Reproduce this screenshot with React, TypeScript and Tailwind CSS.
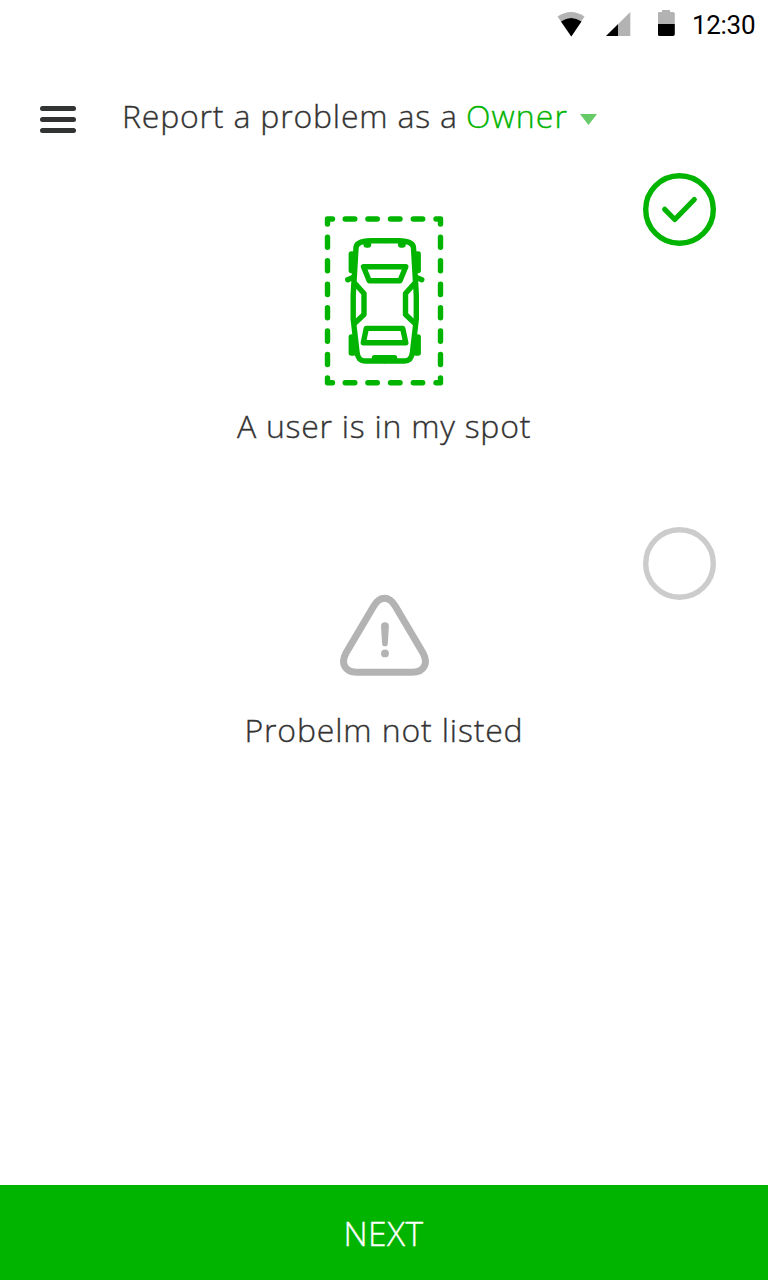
import React from "react";

const label =
  "font-['Open_Sans','Noto_Sans',sans-serif] font-light text-[32px] leading-[44px] whitespace-nowrap [-webkit-text-stroke:0.35px_currentColor]";

function StatusBar() {
  return (
    <div className="flex h-[50px] items-center justify-end pr-[13px]">
      <svg className="mr-[21px]" width="28" height="50" viewBox="557 0 28 50">
        <path d="M557.5 16.5Q571 7.5 584.5 16.5L571.3 36.5Z" fill="#b3b3b3" />
        <path d="M561 21.5Q571 14.5 581.5 21.5L571.3 36.5Z" fill="#000" />
      </svg>
      <svg className="mr-[27px]" width="25" height="50" viewBox="606 0 25 50">
        <path d="M606 36L630.3 12V36Z" fill="#b3b3b3" />
        <path d="M606 36L618 24.3V36Z" fill="#000" />
      </svg>
      <svg className="mr-[17px]" width="17" height="50" viewBox="658 0 17 50">
        <path
          d="M662 10h8v2h3a1.8 1.8 0 0 1 1.8 1.8V24h-17V13.800a1.800 1.800 0 0 1 1.800-1.800h2.400z"
          fill="#b3b3b3"
        />
        <path d="M657.800 24h17v10.200a1.800 1.800 0 0 1-1.800 1.800h-13.400a1.800 1.800 0 0 1-1.800-1.800z" fill="#000" />
      </svg>
      <span className="w-[63px] whitespace-nowrap font-['Roboto',sans-serif] text-[26px] leading-[50px] tracking-[-0.3px] text-black">
        12:30
      </span>
    </div>
  );
}

function Header() {
  return (
    <header className="flex h-[88px] items-start pt-[44px] pl-[40px]">
      <button aria-label="Menu" className="mt-[12px] flex w-[36px] flex-col gap-[6px]">
        <span className="h-[5px] rounded-full bg-[#323333]" />
        <span className="h-[5px] rounded-full bg-[#323333]" />
        <span className="h-[5px] rounded-full bg-[#323333]" />
      </button>
      <h1 className={`${label} ml-[46px] w-[344px] text-[#333] tracking-[0.8px]`}>Report a problem as a</h1>
      <button className="flex items-start">
        <span className={`${label} w-[114px] text-left text-[#00b400] tracking-[1.1px]`}>Owner</span>
        <svg className="mt-[20px]" width="17" height="11" viewBox="0 0 17 11">
          <path d="M0 0H17L8.500 11Z" fill="#66ca66" />
        </svg>
      </button>
    </header>
  );
}

function CarIcon() {
  const half = (
    <>
      <path d="M384 240.700H371Q356 241 356 248L353.200 295L353.200 319L357 352Q358 361 365 361H384" />
      <path d="M355.500 284L364 293.500V314.500L355.500 322.500" />
      <path d="M347.700 279.700L353 277.500" />
      <path d="M351.300 254V270.500M353 254V270.500M351.300 337V353M353.500 337V353" />
    </>
  );
  return (
    <svg width="120" height="170" viewBox="324 216 120 170" fill="none" stroke="#00b400" strokeWidth="5.400" strokeLinecap="round" strokeLinejoin="round">
      <g>
        <path d="M327.500 224V219H332.500M436 219H440.500V224M327.500 378V382.700H332.500M436 382.700H440.500V378" />
        <path d="M345.200 219H354.800M367.900 219H377.300M390.500 219H400M413.300 219H422.700" />
        <path d="M345.200 382.700H354.800M367.900 382.700H377.300M390.500 382.700H400M413.300 382.700H422.700" />
        <path d="M327.500 237.200V247.200M327.500 260.600V270.800M327.500 284.200V294.500M327.500 307.700V317.700M327.500 331V341.200M327.500 354.500V364.500" />
        <path d="M440.500 237.200V247.200M440.500 260.600V270.800M440.500 284.200V294.500M440.500 307.700V317.700M440.500 331V341.200M440.500 354.500V364.500" />
      </g>
      <g>{half}</g>
      <g transform="translate(769.5 0) scale(-1 1)">{half}</g>
      <path d="M363.500 266.800H405.800L400 280.800H369.200Z" />
      <path d="M366.300 328.400H402.700L405.800 342.800H363.300Z" />
      <path d="M374.500 357.800H394.500" />
      <path d="M366.700 244.500H368M401.200 244.500H402.500" strokeWidth="6.500" />
    </svg>
  );
}

function WarningIcon() {
  return (
    <svg className="ml-[2px]" width="90" height="82" viewBox="340 594 90 82">
      <path
        d="M384.500 598.300C389 598.300 392 600.500 395.500 606.500L423 653C428.500 663 424.500 672.300 412 672.300H357C344.500 672.300 340.500 663 346 653L373.500 606.500C377 600.500 380 598.300 384.500 598.300Z"
        fill="none"
        stroke="#b3b3b3"
        strokeWidth="7"
      />
      <path d="M381 626.300a3.900 3.900 0 0 1 7.900 0L387.800 643.500a2.850 2.850 0 0 1-5.700 0z" fill="#b3b3b3" />
      <circle cx="385" cy="653.400" r="3.900" fill="#b3b3b3" />
    </svg>
  );
}

function Radio({ checked }: { checked: boolean }) {
  return (
    <svg className="ml-auto mr-[52px] block" width="73" height="73" viewBox="0 0 73 73" fill="none">
      <circle cx="36.500" cy="36.500" r="33.800" stroke={checked ? "#00b400" : "#cccccc"} strokeWidth="5.400" />
      {checked && (
        <path d="M21.700 36.300L31.800 46.500L51.300 26.500" stroke="#00b400" strokeWidth="5.200" strokeLinecap="round" strokeLinejoin="round" />
      )}
    </svg>
  );
}

export default function App() {
  return (
    <div className="flex h-[1280px] w-[768px] flex-col overflow-hidden bg-white">
      <StatusBar />
      <Header />
      <main className="flex-1">
        <section className="h-[354px] pt-[35px]">
          <Radio checked />
          <div className="-mt-[30px] flex flex-col items-center">
            <CarIcon />
            <p className={`${label} mt-[18px] tracking-[0.75px] text-[#333]`}>A user is in my spot</p>
          </div>
        </section>
        <section className="pt-[35px]">
          <Radio checked={false} />
          <div className="-mt-[6px] flex flex-col items-center">
            <WarningIcon />
            <p className={`${label} mt-[32px] tracking-[0.85px] text-[#333]`}>Probelm not listed</p>
          </div>
        </section>
      </main>
      <button className="h-[95px] w-full bg-[#00b400] pr-[1px] font-['Open_Sans','Noto_Sans',sans-serif] text-[33.500px] leading-[44px] font-light tracking-[0.5px] text-white [-webkit-text-stroke:0.35px_currentColor]">
        NEXT
      </button>
    </div>
  );
}
